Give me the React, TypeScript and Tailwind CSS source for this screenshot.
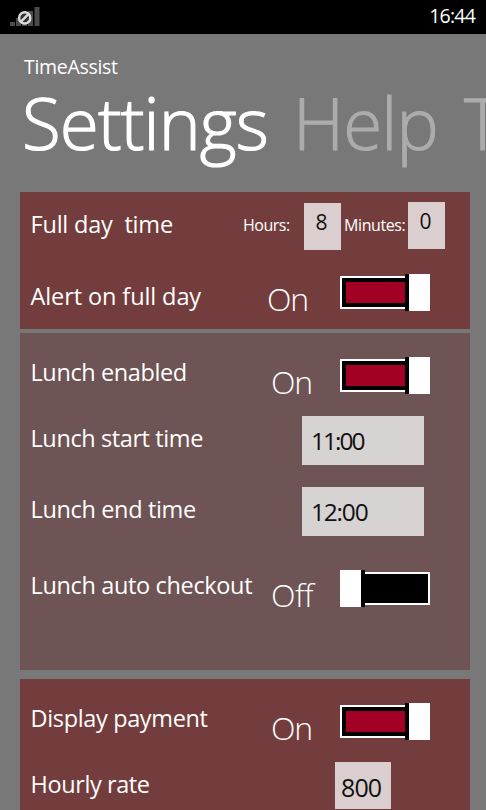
import type { ReactNode } from 'react'
import { clsx } from 'clsx'

interface ToggleProps {
    checked: boolean
    className?: string
}

function Toggle({ checked, className }: ToggleProps) {
    return (
        <div
            role="switch"
            aria-checked={checked}
            className={clsx("flex h-[37px] w-[90px] shrink-0 items-center", !checked && "flex-row-reverse", className)}
        >
            <div className={clsx(
                "h-[33px] flex-1 border-2 border-white bg-black",
                checked ? "border-r-0 py-[4px] pl-[4px]" : "border-l-0"
            )}>
                {checked && <div className="h-full bg-[#a20025]" />}
            </div>
            <div className="h-full w-[4px] bg-black" />
            <div className="h-full w-[21px] bg-white" />
        </div>
    )
}

function Label({ children, className }: { children: ReactNode, className: string }) {
    return (
        <span className={clsx("shrink-0 whitespace-pre pl-[0.5px] text-[23.5px] leading-[24px]", className)}>
            {children}
        </span>
    )
}

function State({ children, className }: { children: ReactNode, className: string }) {
    return (
        <span className={clsx("shrink-0 pl-px text-[32px] leading-[32px] font-light", className)}>
            {children}
        </span>
    )
}

function Field({ value, className }: { value: string, className: string }) {
    return (
        <div className={clsx("shrink-0 text-[#111111]", className)}>
            {value}
        </div>
    )
}

// Signal bars with the "no service" sign on top
function SignalIcon() {
    return (
        <svg width="32" height="22" viewBox="0 0 32 22" className="shrink-0">
            <g fill="#4b4b4b">
                <rect x="0" y="16" width="5" height="4" />
                <rect x="6" y="12" width="5" height="8" />
                <rect x="12" y="8" width="5" height="12" />
                <rect x="18" y="5" width="5" height="15" />
                <rect x="24.5" y="1" width="5" height="19" />
            </g>
            <circle cx="14.7" cy="11.9" r="5.6" fill="#333" stroke="#dcdcdc" strokeWidth="2.4" />
            <path d="M11 15.6 L18.4 8.2" stroke="#dcdcdc" strokeWidth="2.4" />
        </svg>
    )
}

export default function App() {
    return (
        <div className="flex h-[810px] w-[486px] flex-col overflow-hidden bg-[#787878] font-['Open_Sans','Noto_Sans',sans-serif] text-white">
            {/* Status bar */}
            <div className="flex h-[34px] shrink-0 items-start justify-between bg-black pt-[6px] pr-[11px] pl-[10px]">
                <SignalIcon />
                <span className="text-[19.5px] leading-[20px] tracking-[-0.8px]">16:44</span>
            </div>

            {/* Title and pivot headers */}
            <div className="h-[158px] shrink-0 pt-[23px] pl-[24px]">
                <div className="text-[19.5px] leading-[20px] tracking-[-0.3px]">TimeAssist</div>
                <div className="mt-[9px] flex text-[71px] leading-[74px] font-light whitespace-nowrap">
                    <span className="-ml-[2px] w-[271px] shrink-0 tracking-[-0.9px] [-webkit-text-stroke:1.2px_white]">Settings</span>
                    <span className="w-[171px] shrink-0 tracking-[-0.9px] text-[#acacac] [-webkit-text-stroke:1px_#acacac]">Help</span>
                    <span className="shrink-0 text-[#acacac] [-webkit-text-stroke:1px_#acacac]">T</span>
                </div>
            </div>

            <div className="ml-[20px] flex w-[450px] flex-col">
                <section className="h-[137px] shrink-0 bg-[#733d3d] pl-[10px]">
                    <div className="flex h-[82px] items-start">
                        <Label className="mt-[20px] w-[213px] tracking-[-0.2px]">Full day  time</Label>
                        <span className="mt-[23px] w-[61px] text-[16px] leading-[20px] tracking-[-0.5px]">Hours:</span>
                        <Field value="8" className="mt-[11px] h-[47px] w-[37px] bg-[#dbcece] pr-[2px] text-center text-[21px] leading-[38px]" />
                        <span className="mt-[23px] ml-[3px] w-[64px] text-[16px] leading-[20px] whitespace-nowrap tracking-[-0.4px]">Minutes:</span>
                        <Field value="0" className="mt-[10px] h-[47px] w-[37px] bg-[#dbcece] pr-[2px] text-center text-[21px] leading-[38px]" />
                    </div>
                    <div className="flex items-start">
                        <Label className="mt-[10px] w-[236px] tracking-[-0.1px]">Alert on full day</Label>
                        <State className="mt-[9px] w-[74px] tracking-[-1.2px]">On</State>
                        <Toggle checked />
                    </div>
                </section>

                <section className="mt-[4px] h-[337px] shrink-0 bg-[#6e5454] pt-[24px] pl-[10px]">
                    <div className="flex h-[59px] items-start">
                        <Label className="mt-[3px] w-[240px] tracking-[-0.4px]">Lunch enabled</Label>
                        <State className="mt-[9px] w-[70px] tracking-[-1.2px]">On</State>
                        <Toggle checked />
                    </div>
                    <div className="flex h-[71px] items-start">
                        <Label className="mt-[10px] w-[272px] tracking-[-0.4px]">Lunch start time</Label>
                        <Field value="11:00" className="h-[49px] w-[122px] bg-[#d8d3d3] pl-[9px] text-[24.5px] leading-[49px] tracking-[-2px]" />
                    </div>
                    <div className="flex h-[83px] items-start">
                        <Label className="mt-[10px] w-[272px] tracking-[-0.35px]">Lunch end time</Label>
                        <Field value="12:00" className="h-[49px] w-[122px] bg-[#d8d3d3] pl-[9px] text-[24.5px] leading-[49px] tracking-[-1.2px]" />
                    </div>
                    <div className="flex items-start">
                        <Label className="mt-[3px] w-[240px] tracking-[-0.35px]">Lunch auto checkout</Label>
                        <State className="mt-[9px] w-[70px] tracking-[-0.5px]">Off</State>
                        <Toggle checked={false} />
                    </div>
                </section>

                <section className="mt-[9px] h-[131px] shrink-0 bg-[#733d3d] pt-[24px] pl-[10px]">
                    <div className="flex h-[59px] items-start">
                        <Label className="mt-[3px] w-[240px] tracking-[-0.35px]">Display payment</Label>
                        <State className="mt-[9px] w-[70px] tracking-[-1.2px]">On</State>
                        <Toggle checked />
                    </div>
                    <div className="flex items-start">
                        <Label className="mt-[10px] w-[305px] tracking-[-0.4px]">Hourly rate</Label>
                        <Field value="800" className="h-[47px] w-[56px] bg-[#dbcece] pl-[6px] text-[25px] leading-[50px] tracking-[-0.9px]" />
                    </div>
                </section>
            </div>
        </div>
    )
}
